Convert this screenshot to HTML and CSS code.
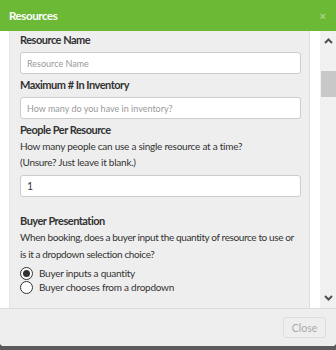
FILE: index.html
```html
<!DOCTYPE html>
<html lang="en">
<head>
  <meta charset="UTF-8" />
  <title>Resources</title>
  <link rel="stylesheet" href="styles.css">
</head>
<body>
  <div class="modal">
    <div class="modal-header">
      <span class="modal-title">Resources</span>
      <span class="modal-close">&times;</span>
    </div>

    <div class="modal-body">
      <div class="panel">
        <label class="field-label">Resource Name</label>
        <input class="field" type="text" placeholder="Resource Name">

        <label class="field-label">Maximum # In Inventory</label>
        <input class="field" type="text" placeholder="How many do you have in inventory?">

        <label class="field-label">People Per Resource</label>
        <p class="help">How many people can use a single resource at a time?<br>(Unsure? Just leave it blank.)</p>
        <input class="field" type="text" value="1">

        <label class="field-label section">Buyer Presentation</label>
        <p class="help tall">When booking, does a buyer input the quantity of resource to use or is it a dropdown selection choice?</p>
        <div class="radios">
          <label class="radio"><span class="dot checked"></span>Buyer inputs a quantity</label>
          <label class="radio"><span class="dot"></span>Buyer chooses from a dropdown</label>
        </div>
      </div>
      <div class="scrollbar">
        <svg class="arrow" width="9" height="6" viewBox="0 0 9 6"><polyline points="1,5 4.5,1.5 8,5" fill="none" stroke="#505050" stroke-width="2"/></svg>
        <span class="thumb"></span>
        <svg class="arrow down" width="9" height="6" viewBox="0 0 9 6"><polyline points="1,1 4.5,4.5 8,1" fill="none" stroke="#505050" stroke-width="2"/></svg>
      </div>
    </div>

    <div class="modal-footer">
      <button class="btn">Close</button>
    </div>
  </div>
</body>
</html>
```

FILE: styles.css
```css
html, body {
  margin: 0;
  padding: 0;
  width: 336px;
  height: 350px;
  overflow: hidden;
  background-color: #5b5b5b;
  font-family: "Lato", "Liberation Sans", sans-serif;
  color: #333;
}

.modal {
  height: 346px;
  background-color: #fff;
  border-radius: 0 0 4px 4px;
  overflow: hidden;
  display: flex;
  flex-direction: column;
}

.modal-header {
  height: 31px;
  flex: none;
  background-color: #6cb936;
  padding: 0 10px 0 9px;
  display: flex;
  align-items: center;
  justify-content: space-between;
}

.modal-title {
  color: #fff;
  font-weight: bold;
  font-size: 11.5px;
  letter-spacing: -0.4px;
}

.modal-close {
  color: #a3d585;
  font-size: 11px;
  font-weight: bold;
  font-family: "Liberation Sans", sans-serif;
}

.modal-body {
  height: 277px;
  flex: none;
  display: flex;
}

.panel {
  margin-left: 9px;
  width: 280px;
  padding: 1px 10px 0 10px;
  background-color: #eee;
  border-left: 1px solid #e6e6e6;
  border-right: 1px solid #ddd;
  overflow: hidden;
}

.field-label {
  display: block;
  font-weight: bold;
  font-size: 11px;
  letter-spacing: -0.5px;
  line-height: 16px;
  margin: 0 0 4px;
}

.field-label.section {
  margin-top: 16px;
}

.field {
  display: block;
  box-sizing: border-box;
  width: 281px;
  height: 22px;
  margin: 0 0 3px;
  padding: 0 6px;
  border: 1px solid #ccc;
  border-radius: 3px;
  background: #fff;
  font-family: inherit;
  font-size: 10.5px;
  color: #333;
}

.field::placeholder {
  color: #999;
  font-size: 9px;
}

.help {
  margin: -4px 0 5px;
  font-size: 10px;
  letter-spacing: -0.25px;
  line-height: 16px;
}

.help.tall {
  letter-spacing: -0.38px;
  line-height: 17px;
  margin-bottom: 3px;
}

.radio {
  display: flex;
  align-items: center;
  font-size: 10px;
  letter-spacing: -0.25px;
  line-height: 14px;
}

.dot {
  box-sizing: border-box;
  width: 13px;
  height: 13px;
  margin-right: 6px;
  border: 1px solid #333;
  border-radius: 50%;
  background: #fff;
  position: relative;
}

.dot.checked::after {
  content: "";
  position: absolute;
  left: 2px;
  top: 2px;
  width: 7px;
  height: 7px;
  border-radius: 50%;
  background: #333;
}

.scrollbar {
  margin-left: 10px;
  width: 16px;
  background-color: #f1f1f1;
  display: flex;
  flex-direction: column;
  align-items: center;
}

.arrow {
  margin-top: 7px;
}

.arrow.down {
  margin-top: auto;
  margin-bottom: 7px;
}

.thumb {
  width: 15px;
  height: 26px;
  margin-top: 27px;
  margin-left: 1px;
  background-color: #c8c8c8;
}

.modal-footer {
  flex: 1;
  border-top: 1px solid #ddd;
  background-color: #eee;
  display: flex;
  align-items: center;
  justify-content: flex-end;
  padding-right: 10px;
}

.btn {
  width: 43px;
  height: 21px;
  border: 1px solid #ddd;
  border-radius: 3px;
  background: #eee;
  color: #aaa;
  font-family: inherit;
  font-size: 10.5px;
  padding: 0;
}
```
